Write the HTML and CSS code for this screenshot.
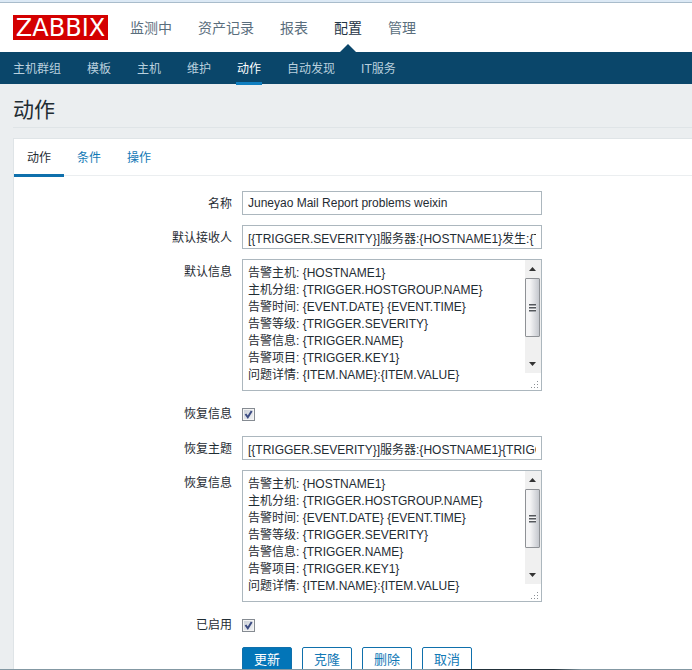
FILE: index.html
```html
<!DOCTYPE html>
<html lang="zh-CN">
<head>
<meta charset="utf-8">
<meta name="viewport" content="width=device-width, initial-scale=1">
<title>动作</title>
<link rel="stylesheet" href="styles.css">
</head>
<body>
<div class="window">
  <header class="top">
    <a class="logo" href="#">ZABBIX</a>
    <nav class="main-nav">
      <a href="#">监测中</a>
      <a href="#">资产记录</a>
      <a href="#">报表</a>
      <a href="#" class="selected">配置</a>
      <a href="#">管理</a>
    </nav>
  </header>
  <nav class="sub-nav">
    <a href="#">主机群组</a>
    <a href="#">模板</a>
    <a href="#">主机</a>
    <a href="#">维护</a>
    <a href="#" class="selected">动作</a>
    <a href="#">自动发现</a>
    <a href="#">IT服务</a>
  </nav>
  <main class="content">
    <h1>动作</h1>
    <div class="panel">
      <nav class="tabs">
        <a href="#" class="selected">动作</a>
        <a href="#">条件</a>
        <a href="#">操作</a>
      </nav>
      <form class="form">
        <label for="name">名称</label>
        <input class="text" id="name" type="text" value="Juneyao Mail Report problems weixin">

        <label for="subject">默认接收人</label>
        <input class="text" id="subject" type="text" value="[{TRIGGER.SEVERITY}]服务器:{HOSTNAME1}发生:{TRIGGER.NAME}">

        <label for="message">默认信息</label>
        <div class="area">
          <textarea id="message">告警主机: {HOSTNAME1}
主机分组: {TRIGGER.HOSTGROUP.NAME}
告警时间: {EVENT.DATE} {EVENT.TIME}
告警等级: {TRIGGER.SEVERITY}
告警信息: {TRIGGER.NAME}
告警项目: {TRIGGER.KEY1}
问题详情: {ITEM.NAME}:{ITEM.VALUE}</textarea>
          <div class="scrollbar" aria-hidden="true">
            <svg class="arrow" viewBox="0 0 7 4"><path d="M0 4 3.5 0 7 4z"/></svg>
            <span class="thumb"><i></i></span>
            <svg class="arrow" viewBox="0 0 7 4"><path d="M0 0h7L3.5 4z"/></svg>
          </div>
          <svg class="grip" viewBox="0 0 8 8" aria-hidden="true"><path d="M6 0h1v1H6zM3 3h1v1H3zM6 3h1v1H6zM0 6h1v1H0zM3 6h1v1H3zM6 6h1v1H6z"/></svg>
        </div>

        <label for="recovery">恢复信息</label>
        <span class="check"><input id="recovery" type="checkbox" checked><svg viewBox="0 0 13 13" aria-hidden="true"><path d="M3.5 6 5.8 9.3 9.7 3"/></svg></span>

        <label for="rsubject">恢复主题</label>
        <input class="text" id="rsubject" type="text" value="[{TRIGGER.SEVERITY}]服务器:{HOSTNAME1}{TRIGGER.NAME}">

        <label for="rmessage">恢复信息</label>
        <div class="area">
          <textarea id="rmessage">告警主机: {HOSTNAME1}
主机分组: {TRIGGER.HOSTGROUP.NAME}
告警时间: {EVENT.DATE} {EVENT.TIME}
告警等级: {TRIGGER.SEVERITY}
告警信息: {TRIGGER.NAME}
告警项目: {TRIGGER.KEY1}
问题详情: {ITEM.NAME}:{ITEM.VALUE}</textarea>
          <div class="scrollbar" aria-hidden="true">
            <svg class="arrow" viewBox="0 0 7 4"><path d="M0 4 3.5 0 7 4z"/></svg>
            <span class="thumb"><i></i></span>
            <svg class="arrow" viewBox="0 0 7 4"><path d="M0 0h7L3.5 4z"/></svg>
          </div>
          <svg class="grip" viewBox="0 0 8 8" aria-hidden="true"><path d="M6 0h1v1H6zM3 3h1v1H3zM6 3h1v1H6zM0 6h1v1H0zM3 6h1v1H3zM6 6h1v1H6z"/></svg>
        </div>

        <label for="enabled">已启用</label>
        <span class="check"><input id="enabled" type="checkbox" checked><svg viewBox="0 0 13 13" aria-hidden="true"><path d="M3.5 6 5.8 9.3 9.7 3"/></svg></span>

        <div class="buttons">
          <button type="button" class="primary">更新</button>
          <button type="button">克隆</button>
          <button type="button">删除</button>
          <button type="button">取消</button>
        </div>
      </form>
    </div>
  </main>
  <div class="window-edge"></div>
</div>
</body>
</html>
```
FILE: styles.css
```css
* {
  box-sizing: border-box;
}

body {
  margin: 0;
  font: 12px/18px "Liberation Sans", "Noto Sans CJK SC", sans-serif;
  color: #1f2c33;
}

a {
  text-decoration: none;
}

.window {
  height: 100vh;
  overflow: hidden;
  display: flex;
  flex-direction: column;
  background: #ebeef0;
}

.top {
  flex: none;
  display: flex;
  align-items: center;
  gap: 22px;
  height: 52px;
  padding: 0 13px;
  border-top: 3px solid #a9bccb;
  background: #fff;
}

.top::before {
  content: "";
  position: absolute;
  top: 0;
  left: 0;
  right: 0;
  height: 2px;
  background: #dce9f5;
}

.logo {
  width: 95px;
  height: 25px;
  background: #d40000;
  color: #fff;
  font: 24px/27px "DejaVu Sans", sans-serif;
  text-align: center;
}

.main-nav {
  display: flex;
  gap: 26px;
  align-self: stretch;
}

.main-nav a {
  position: relative;
  color: #5a6e7d;
  font-size: 14px;
  line-height: 51px;
}

.main-nav .selected {
  color: #1f3546;
}

.main-nav .selected::after {
  content: "";
  position: absolute;
  left: 50%;
  bottom: 0;
  margin-left: -8px;
  border: 8px solid transparent;
  border-top: 0;
  border-bottom-color: #0a466a;
}

.sub-nav {
  flex: none;
  display: flex;
  gap: 24px;
  height: 32px;
  padding: 0 12px;
  background: #0a466a;
}

.sub-nav a {
  height: 33px;
  padding: 0 1px;
  color: #b9d0de;
  line-height: 35px;
}

.sub-nav .selected {
  color: #fff;
  border-bottom: 3px solid #0f7ec0;
}

.content {
  padding-left: 13px;
}

h1 {
  margin: 0 0 10px;
  height: 44px;
  border-bottom: 1px solid #dfe4e7;
  font-size: 21px;
  font-weight: 400;
  line-height: 52px;
}

.panel {
  border: 1px solid #dfe4e7;
  border-right: 0;
  background: #fff;
}

.tabs {
  display: flex;
  height: 37px;
  border-bottom: 1px solid #ebeef0;
}

.tabs a {
  height: 38px;
  padding: 0 13px;
  color: #1279b6;
  line-height: 38px;
}

.tabs .selected {
  color: #1f2c33;
  border-bottom: 3px solid #0f70ac;
}

.form {
  display: grid;
  grid-template-columns: 218px minmax(0, 300px);
  gap: 10px;
  padding: 15px 0;
}

label {
  height: 24px;
  line-height: 26px;
  text-align: right;
}

.text,
textarea {
  display: block;
  width: 100%;
  margin: 0;
  border: 1px solid #acb7be;
  border-radius: 0;
  background: #fff;
  color: inherit;
  font: inherit;
}

.text {
  height: 24px;
  padding: 0 5px;
  line-height: 22px;
}

.area {
  position: relative;
}

textarea {
  height: 132px;
  padding: 5px;
  line-height: 17px;
  resize: none;
  overflow: hidden;
}

.scrollbar {
  position: absolute;
  top: 1px;
  right: 1px;
  width: 16px;
  height: 113px;
  display: flex;
  flex-direction: column;
  align-items: flex-start;
  background: #f0f0f0;
}

.arrow {
  width: 7px;
  height: 4px;
  margin: 7px 4px;
  fill: #333;
}

.thumb {
  width: 15px;
  height: 59px;
  margin-bottom: 18px;
  display: flex;
  align-items: center;
  justify-content: center;
  border: 1px solid #8f9296;
  border-radius: 1px;
  background: linear-gradient(90deg, #f5f5f6 30%, #c5c8ce);
}

.thumb i {
  width: 7px;
  height: 8px;
  background: repeating-linear-gradient(#55585c 0 1px, #a0a3a8 1px 2px, #f5f5f5 2px 3px);
}

.grip {
  position: absolute;
  right: 3px;
  bottom: 2px;
  width: 8px;
  height: 8px;
  fill: #8c9196;
}

.check {
  position: relative;
  height: 25px;
  padding-top: 7px;
}

.check input {
  display: block;
  appearance: none;
  width: 13px;
  height: 13px;
  margin: 0;
  border: 1px solid #858b92;
  background: linear-gradient(135deg, #c9ced6, #f3f4f6);
  box-shadow: inset 0 0 0 1px #f4f4f4;
}

.check svg {
  position: absolute;
  top: 7px;
  left: 0;
  width: 13px;
  height: 13px;
  fill: none;
  stroke: #3c4c82;
  stroke-width: 2;
  visibility: hidden;
  pointer-events: none;
}

.check input:checked + svg {
  visibility: visible;
}

.buttons {
  grid-column: 2;
  display: flex;
  gap: 10px;
}

button {
  width: 50px;
  height: 26px;
  padding: 0;
  border: 1px solid #0f70ac;
  border-radius: 2px;
  background: #fff;
  color: #1279b6;
  font: 13px/24px "Liberation Sans", "Noto Sans CJK SC", sans-serif;
}

.primary {
  background: #0275b8;
  color: #fff;
}

.window-edge {
  position: fixed;
  left: 0;
  right: 0;
  bottom: 0;
  height: 1px;
  background: linear-gradient(90deg, #8398a3 62%, #22313a 66%, #22313a 80%, #8398a3 84%);
}
```
